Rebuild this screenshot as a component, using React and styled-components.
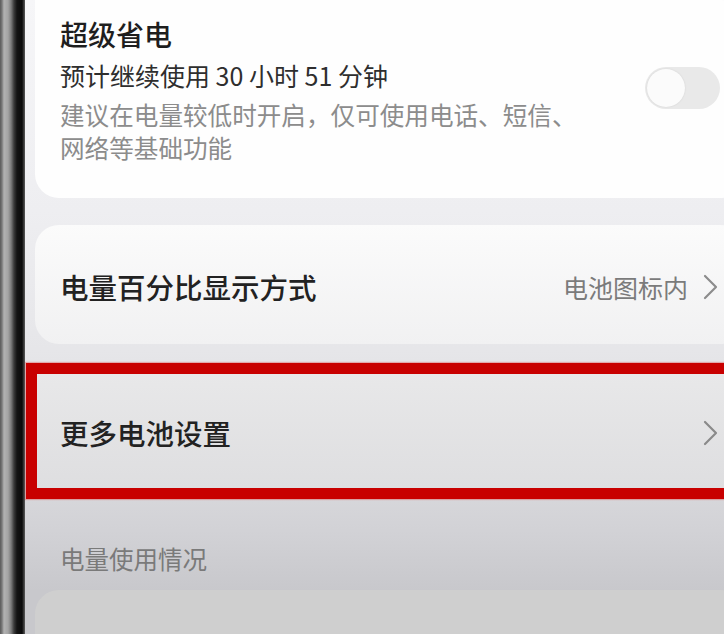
import React from "react";
import styled, { createGlobalStyle } from "styled-components";

const Global = createGlobalStyle`
  html, body { margin: 0; padding: 0; }
  body {
    width: 724px;
    height: 634px;
    overflow: hidden;
    font-family: "Noto Sans CJK SC", "Noto Sans", sans-serif;
    background: #d0d0d3;
  }
`;

const Frame = styled.div`
  display: flex;
  width: 724px;
  height: 634px;
  overflow: hidden;
`;

const Bezel = styled.div`
  flex: 0 0 25px;
  background: linear-gradient(
    to right,
    #5a5a5a 0px,
    #7a7a7a 2px,
    #b2b2b2 4px,
    #a4a4a4 8px,
    #7e7e7e 11px,
    #3a3a3a 14px,
    #141414 17px,
    #0a0a0a 22px,
    #5c5c5c 25px
  );
`;

const Screen = styled.div`
  flex: 1;
  min-width: 0;
  display: flex;
  flex-direction: column;
  background: linear-gradient(
    to bottom,
    #f6f6f8 0px,
    #eeeef1 210px,
    #e6e6e9 350px,
    #dcdcdf 460px,
    #d2d2d6 530px,
    #c8c8cc 590px
  );
`;

const Card = styled.div`
  margin: ${(p) => p.$margin || "0"};
  margin-right: -20px;
  border-radius: ${(p) => p.$radius || "24px"};
  background: ${(p) => p.$bg || "#fefefe"};
`;

const SaverCard = styled(Card)`
  padding: 17px 24px 34px 25px;
  display: flex;
  flex-direction: column;
  gap: 8px;
`;

const Title = styled.div`
  font-size: 28px;
  line-height: 34px;
  font-weight: 500;
  color: #1e1e1e;
`;

const SaverRow = styled.div`
  display: flex;
  justify-content: space-between;
  align-items: flex-start;
`;

const SaverText = styled.div`
  display: flex;
  flex-direction: column;
  gap: 7px;
`;

const Estimate = styled.div`
  font-size: 25px;
  line-height: 32px;
  color: #2e2e2e;
`;

const Hint = styled.div`
  font-size: 24.6px;
  line-height: 33px;
  color: #8c8c8c;
  max-width: 525px;
`;

const Toggle = styled.div`
  margin-top: 8px;
  width: 75px;
  height: 42px;
  border-radius: 21px;
  background: #e9e9e9;
  display: flex;
  align-items: center;
  padding: 0 2px;
  box-sizing: border-box;
`;

const Knob = styled.div`
  width: 38px;
  height: 38px;
  border-radius: 50%;
  background: #fbfbfb;
  box-shadow: 0 0 2px rgba(0, 0, 0, 0.1);
`;

const RowCard = styled(Card)`
  min-height: ${(p) => p.$h || "119px"};
  box-sizing: border-box;
  display: flex;
  align-items: center;
  justify-content: space-between;
  padding: 4px ${(p) => p.$pr || "26px"} 0 ${(p) => p.$pl || "25px"};
`;

const RowLabel = styled.div`
  font-size: 28.5px;
  line-height: 34px;
  font-weight: 500;
  color: #222;
`;

const RowEnd = styled.div`
  display: flex;
  align-items: center;
  gap: 15px;
`;

const RowValue = styled.div`
  font-size: 25px;
  line-height: 32px;
  color: #7b7b7b;
`;

const Highlight = styled.div`
  margin: 19px -40px 0 1px;
  border: 11px solid #c80000;
  box-shadow: 0 0 1px 1px rgba(220, 60, 60, 0.35);
`;

const SectionHeader = styled.div`
  margin: 45px 0 16px 35px;
  font-size: 24.5px;
  line-height: 30px;
  color: #7a7a7a;
`;

const Chevron = ({ color = "#8c8c8c" }) => (
  <svg width="15" height="26" viewBox="0 0 15 26" fill="none">
    <polyline
      points="2,2 13,13 2,24"
      stroke={color}
      strokeWidth="2.2"
      strokeLinecap="round"
      strokeLinejoin="round"
    />
  </svg>
);

export default function App() {
  return (
    <>
      <Global />
      <Frame>
        <Bezel />
        <Screen>
          <SaverCard $margin="0 0 0 10px" $radius="0 24px 24px 24px">
            <Title>超级省电</Title>
            <SaverRow>
              <SaverText>
                <Estimate>预计继续使用 30 小时 51 分钟</Estimate>
                <Hint>建议在电量较低时开启，仅可使用电话、短信、网络等基础功能</Hint>
              </SaverText>
              <Toggle>
                <Knob />
              </Toggle>
            </SaverRow>
          </SaverCard>

          <RowCard
            $margin="27px 0 0 10px"
            $bg="linear-gradient(to bottom, #fbfbfb, #f1f1f2)"
          >
            <RowLabel>电量百分比显示方式</RowLabel>
            <RowEnd>
              <RowValue>电池图标内</RowValue>
              <Chevron />
            </RowEnd>
          </RowCard>

          <Highlight>
            <RowCard
              $h="114px"
              $pl="23px"
              $pr="55px"
              $radius="0"
              $bg="linear-gradient(to bottom, #e8e8e9, #dedee0)"
            >
              <RowLabel>更多电池设置</RowLabel>
              <Chevron color="#8a8a8a" />
            </RowCard>
          </Highlight>

          <SectionHeader>电量使用情况</SectionHeader>

          <RowCard $margin="0 0 0 10px" $h="120px" $bg="#cfcfcf" />
        </Screen>
      </Frame>
    </>
  );
}
